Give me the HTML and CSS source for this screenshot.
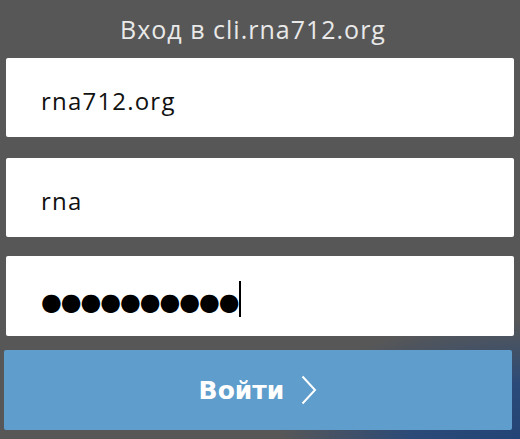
FILE: index.html
```html
<!DOCTYPE html>
<html lang="ru">
<head>
  <meta charset="UTF-8">
  <meta name="viewport" content="width=device-width, initial-scale=1.0">
  <title>Вход</title>
  <link rel="stylesheet" href="styles.css">
</head>
<body>
  <div class="login">
    <h2 class="login-title">Вход в cli.rna712.org</h2>

    <div class="field field-domain">
      <span class="field-value">rna712.org</span>
    </div>

    <div class="field field-user">
      <span class="field-value">rna</span>
    </div>

    <div class="field field-pass">
      <span class="field-value dots">●●●●●●●●●●</span><span class="caret"></span>
    </div>

    <button class="login-btn" type="button">
      <span>Войти</span>
      <svg class="chevron" width="16" height="30" viewBox="0 0 16 30">
        <path d="M1.5 1.5 L14 15 L1.5 28.5" fill="none" stroke="#fff" stroke-width="2"/>
      </svg>
    </button>
  </div>
</body>
</html>
```

FILE: styles.css
```css
body {
  margin: 0;
  height: 439px;
  overflow: hidden;
  font-family: "Open Sans", sans-serif;
  background:
    radial-gradient(240px 120px at 100% 100%, #234476 0, #2b4a78 45%, rgba(87, 87, 87, 0) 100%),
    #575757;
}

.login {
  display: flex;
  flex-direction: column;
  padding: 0 6px;
}

.login-title {
  margin: 13px 0;
  padding-right: 14px;
  font-size: 25px;
  font-weight: normal;
  line-height: 32px;
  letter-spacing: 1px;
  text-align: center;
  color: #e9e9e9;
}

/* Fields */
.field {
  display: flex;
  align-items: center;
  box-sizing: border-box;
  height: 79px;
  padding: 5px 0 0 35px;
  background: #fff;
  border-radius: 2px;
  color: #111;
  font-size: 24px;
  letter-spacing: 1.2px;
}

.field-user {
  margin-top: 21px;
}

.field-pass {
  margin-top: 19px;
  height: 80px;
}

.dots {
  margin-top: 6px;
  font-family: "DejaVu Sans", sans-serif;
  font-size: 24px;
  letter-spacing: -1.2px;
  color: #000;
}

.caret {
  display: inline-block;
  width: 2px;
  height: 36px;
  margin-left: 1px;
  background: #000;
}

/* Button */
.login-btn {
  display: flex;
  align-items: center;
  justify-content: center;
  gap: 17px;
  height: 80px;
  margin: 14px 2px 0 -2px;
  border: none;
  border-radius: 2px;
  background-color: #5f9dcc;
  color: #fff;
  font-family: "DejaVu Sans", sans-serif;
  font-size: 25px;
  font-weight: bold;
  cursor: pointer;
}

.chevron {
  display: block;
}
```
